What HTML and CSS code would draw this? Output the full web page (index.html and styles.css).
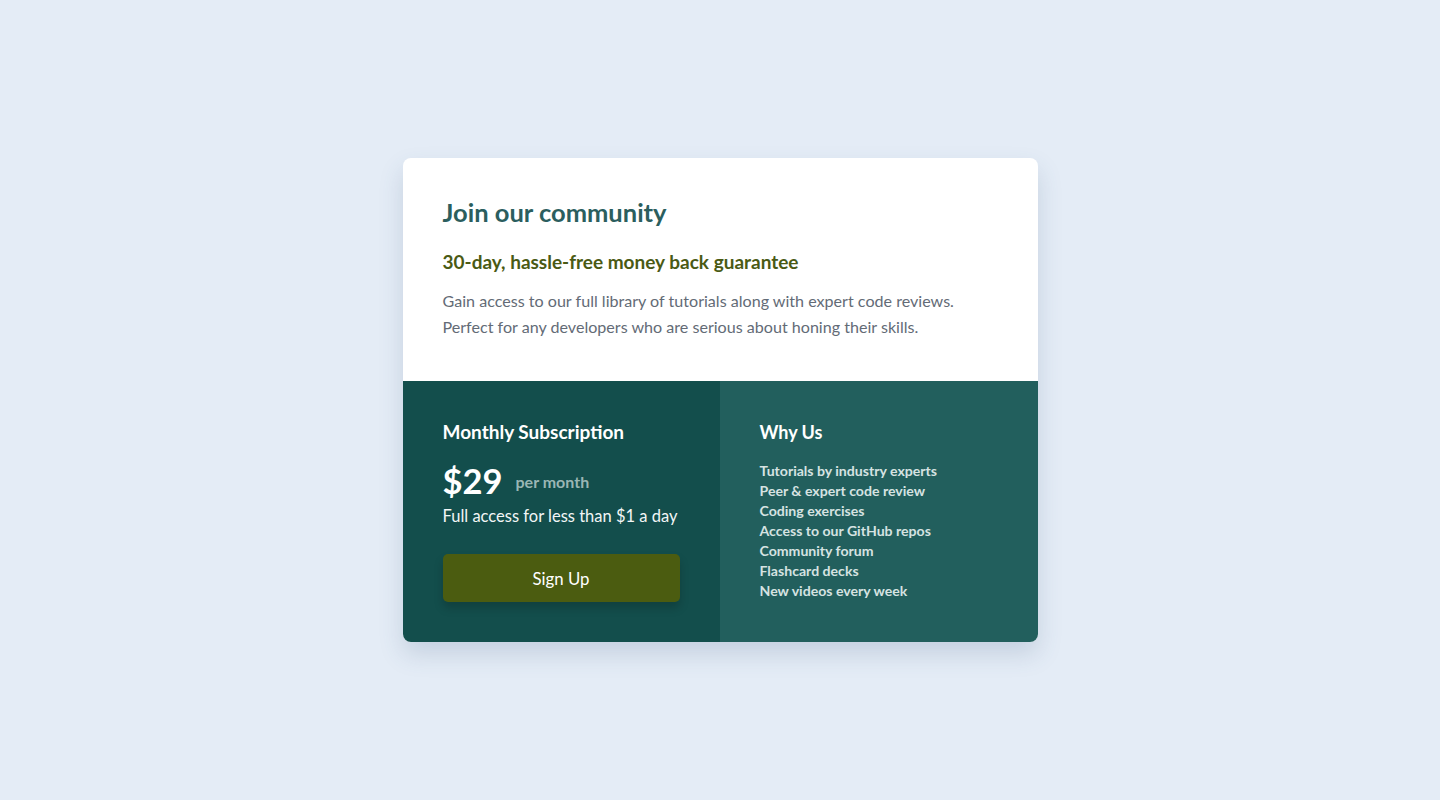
FILE: index.html
```html
<!DOCTYPE html>
<html lang="en">
<head>
<meta charset="utf-8">
<title>Single price grid</title>
<link rel="stylesheet" href="styles.css">
</head>
<body>
<main class="card">
  <section class="intro">
    <h1 class="intro-title">Join our community</h1>
    <h2 class="intro-sub">30-day, hassle-free money back guarantee</h2>
    <p class="intro-text">Gain access to our full library of tutorials along with expert code reviews.<br>Perfect for any developers who are serious about honing their skills.</p>
  </section>
  <div class="bottom">
    <section class="sub">
      <h3 class="col-title">Monthly Subscription</h3>
      <div class="price"><span class="amount">$29</span><span class="per">per month</span></div>
      <p class="access">Full access for less than $1 a day</p>
      <button class="signup">Sign Up</button>
    </section>
    <section class="why">
      <h3 class="col-title">Why Us</h3>
      <ul class="why-list">
        <li>Tutorials by industry experts</li>
        <li>Peer &amp; expert code review</li>
        <li>Coding exercises</li>
        <li>Access to our GitHub repos</li>
        <li>Community forum</li>
        <li>Flashcard decks</li>
        <li>New videos every week</li>
      </ul>
    </section>
  </div>
</main>
</body>
</html>
```
FILE: styles.css
```css
* { box-sizing: border-box; margin: 0; padding: 0; }
html, body { height: 100%; }
body {
  background: #e4ecf6;
  font-family: Lato, "Open Sans", sans-serif;
  display: flex;
  align-items: flex-start;
  justify-content: center;
  padding-top: 158px;
}
.card {
  width: 635px;
  border-radius: 8px;
  overflow: hidden;
  background: #fff;
  box-shadow: 0 12px 24px rgba(60, 90, 130, 0.18);
}
.intro {
  padding: 40px 40px 41px;
}
.intro-title {
  font-size: 25.5px;
  line-height: 28px;
  font-weight: 700;
  color: #2b5e5e;
  margin-bottom: 24px;
}
.intro-sub {
  font-size: 19px;
  line-height: 24px;
  font-weight: 700;
  color: #4a5a14;
  margin-bottom: 14px;
}
.intro-text {
  font-size: 16.1px;
  line-height: 26px;
  color: #636b76;
}
.bottom {
  display: grid;
  grid-template-columns: 317px 318px;
}
.sub {
  background: #134e4c;
  padding: 40px 30px 40px 40px;
  color: #fff;
}
.why {
  background: #225f5d;
  padding: 40px 40px 40px;
  color: #fff;
}
.col-title {
  font-size: 19px;
  line-height: 22px;
  font-weight: 700;
  color: #fff;
}
.why .col-title {
  font-size: 18px;
}
.price {
  display: flex;
  align-items: center;
  gap: 13px;
  margin-top: 21px;
  height: 34px;
}
.amount {
  font-size: 34.5px;
  line-height: 34px;
  font-weight: 700;
}
.per {
  font-size: 16px;
  color: #9ab6b4;
  font-weight: 700;
  padding-top: 1px;
}
.access {
  margin-top: 7px;
  font-size: 16.5px;
  line-height: 22px;
  color: #f2f6f6;
  white-space: nowrap;
}
.signup {
  display: block;
  margin-top: 27px;
  width: 237px;
  height: 48px;
  border: none;
  border-radius: 5px;
  background: #4b5c10;
  color: #fff;
  font-family: inherit;
  font-size: 16.8px;
  box-shadow: 0 6px 10px rgba(0, 0, 0, 0.18);
}
.why-list {
  list-style: none;
  margin-top: 18px;
  font-size: 14.1px;
  line-height: 20px;
  color: #d6e3e2;
  font-weight: 700;
}
```
